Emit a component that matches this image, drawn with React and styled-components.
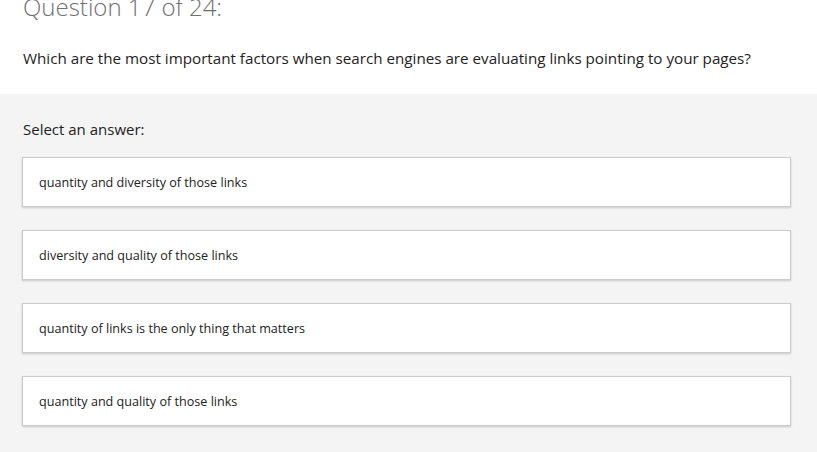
import React from 'react'
import styled, { createGlobalStyle } from 'styled-components'

const GlobalStyle = createGlobalStyle`
    html, body {
        margin: 0;
        padding: 0;
        background: #f4f4f4;
        font-family: "Open Sans", "Noto Sans", sans-serif;
    }
`

const answers = [
    'quantity and diversity of those links',
    'diversity and quality of those links',
    'quantity of links is the only thing that matters',
    'quantity and quality of those links',
]

function App() {
    return (
        <>
            <GlobalStyle />
            <QuizStyled>
                <Header>
                    <Title>Question 17 of 24:</Title>
                    <QuestionText>
                        Which are the most important factors when search engines are evaluating links pointing to your pages?
                    </QuestionText>
                </Header>
                <AnswerArea>
                    <Prompt>Select an answer:</Prompt>
                    <AnswerList>
                        {answers.map(a => (
                            <Answer key={a}>{a}</Answer>
                        ))}
                    </AnswerList>
                </AnswerArea>
            </QuizStyled>
        </>
    )
}

const QuizStyled = styled.div`
    display: flex;
    flex-direction: column;
    min-height: 452px;
`

const Header = styled.div`
    background: #fff;
    height: 94px;
    padding: 0 26px 0 23px;
    box-sizing: border-box;
    overflow: hidden;
`

const Title = styled.h1`
    margin: -9px 0 0;
    font-size: 24px;
    font-weight: 300;
    line-height: 32px;
    color: #707070;
`

const QuestionText = styled.p`
    margin: 25px 0 0;
    font-size: 15.2px;
    line-height: 20px;
    color: #222;
`

const AnswerArea = styled.div`
    flex: 1;
    background: #f4f4f4;
    padding: 25px 26px 20px 22px;
`

const Prompt = styled.div`
    font-size: 15px;
    line-height: 20px;
    color: #222;
    padding-left: 1px;
`

const AnswerList = styled.div`
    display: flex;
    flex-direction: column;
    gap: 23px;
    margin-top: 18px;
`

const Answer = styled.button`
    display: flex;
    align-items: center;
    height: 50px;
    box-sizing: border-box;
    padding: 0 16px;
    background: #fff;
    border: 1px solid #cccccc;
    box-shadow: 0 1px 2px rgba(0, 0, 0, 0.18);
    font-family: inherit;
    font-size: 12.6px;
    color: #222;
    text-align: left;
    cursor: pointer;
`

export default App
